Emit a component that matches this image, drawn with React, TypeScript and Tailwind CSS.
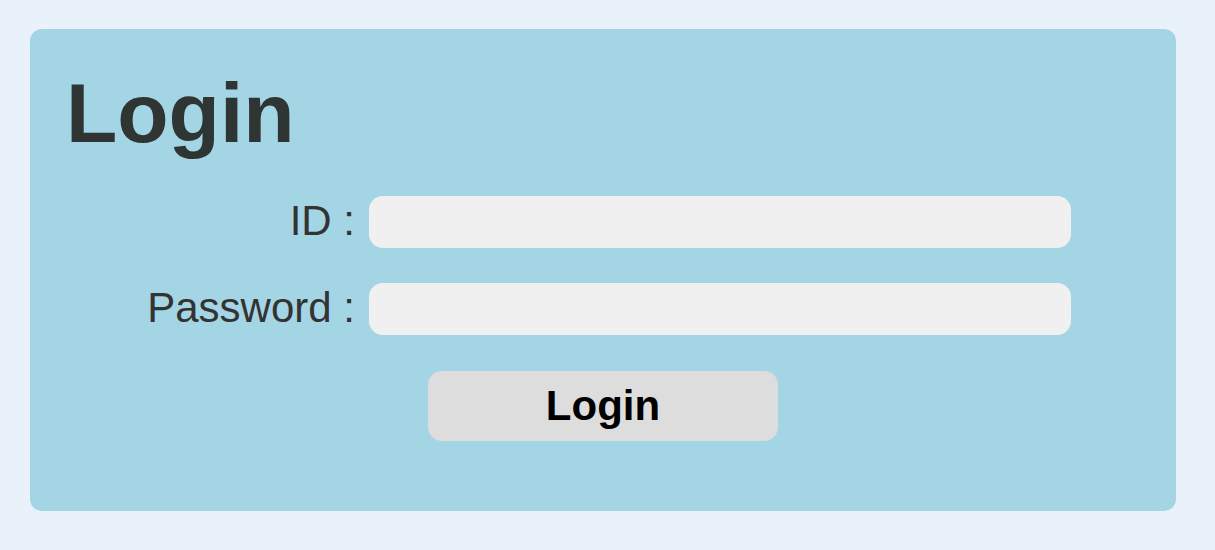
import * as React from 'react';

const App: React.FC = () => {
  const [id, setId] = React.useState<string>('');
  const [password, setPassword] = React.useState<string>('');

  return (
    <div className="min-h-screen w-full bg-[#e9f1fa] pt-[29px] pl-[30px] font-['Liberation_Sans',Arial,sans-serif]">
      <div className="w-[1146px] rounded-xl bg-[#a4d5e5] p-9 pb-[70px]">
        <h1 className="text-[84px] font-bold leading-[1.15] text-[#2f3533]">Login</h1>

        <div className="mt-[34px] flex flex-col gap-[35px]">
          <div className="flex items-center gap-3">
            <label className="w-[291px] pr-[2px] text-right text-[42px] leading-[1.15] text-[#333]">ID :</label>
            <input
              className="h-[52px] w-[702px] rounded-[14px] bg-[#f0f0f0] px-4 text-2xl outline-none"
              value={id}
              onChange={(e) => setId(e.target.value)}
              name="id"
            />
          </div>
          <div className="flex items-center gap-3">
            <label className="w-[291px] pr-[2px] text-right text-[42px] leading-[1.15] text-[#333]">Password :</label>
            <input
              type="password"
              className="h-[52px] w-[702px] rounded-[14px] bg-[#f0f0f0] px-4 text-2xl outline-none"
              value={password}
              onChange={(e) => setPassword(e.target.value)}
              name="password"
            />
          </div>
        </div>

        <div className="mt-[36px] flex justify-center">
          <button className="h-[70px] w-[350px] rounded-[14px] bg-[#dddddd] text-[42px] font-bold text-black">
            Login
          </button>
        </div>
      </div>
    </div>
  );
};

export default App;
